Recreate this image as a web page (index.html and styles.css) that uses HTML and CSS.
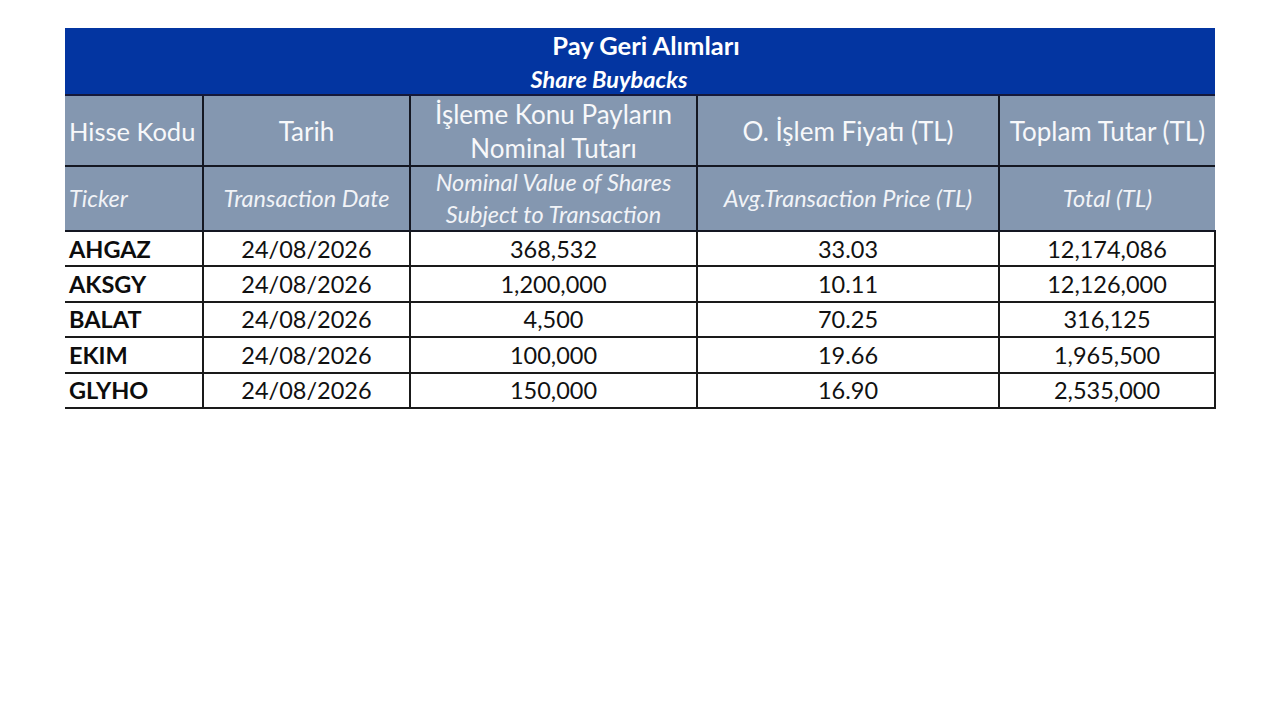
FILE: index.html
```html
<!DOCTYPE html>
<html lang="tr">
<head>
<meta charset="utf-8">
<title>Pay Geri Alımları</title>
<link rel="stylesheet" href="styles.css">
</head>
<body>
<div class="page">
  <table class="buybacks">
    <colgroup>
      <col class="c1"><col class="c2"><col class="c3"><col class="c4"><col class="c5">
    </colgroup>
    <thead>
      <tr class="title-row">
        <th colspan="5" class="title">
          <div class="title-tr">Pay Geri Alımları</div>
          <div class="title-en">Share Buybacks</div>
        </th>
      </tr>
      <tr class="head-tr">
        <th class="left">Hisse Kodu</th>
        <th>Tarih</th>
        <th>İşleme Konu Payların<br>Nominal Tutarı</th>
        <th>O. İşlem Fiyatı (TL)</th>
        <th>Toplam Tutar (TL)</th>
      </tr>
      <tr class="head-en">
        <th class="left">Ticker</th>
        <th>Transaction Date</th>
        <th>Nominal Value of Shares<br>Subject to Transaction</th>
        <th>Avg.Transaction Price (TL)</th>
        <th>Total (TL)</th>
      </tr>
    </thead>
    <tbody>
      <tr><td class="ticker">AHGAZ</td><td>24/08/2026</td><td>368,532</td><td>33.03</td><td>12,174,086</td></tr>
      <tr><td class="ticker">AKSGY</td><td>24/08/2026</td><td>1,200,000</td><td>10.11</td><td>12,126,000</td></tr>
      <tr><td class="ticker">BALAT</td><td>24/08/2026</td><td>4,500</td><td>70.25</td><td>316,125</td></tr>
      <tr><td class="ticker">EKIM</td><td>24/08/2026</td><td>100,000</td><td>19.66</td><td>1,965,500</td></tr>
      <tr><td class="ticker">GLYHO</td><td>24/08/2026</td><td>150,000</td><td>16.90</td><td>2,535,000</td></tr>
    </tbody>
  </table>
</div>
</body>
</html>
```

FILE: styles.css
```css
html, body {
  margin: 0;
  padding: 0;
  background: #ffffff;
}

body {
  font-family: Lato, "Open Sans", "Liberation Sans", sans-serif;
}

.page {
  padding: 28px 0 0 65px;
}

.buybacks {
  border-collapse: collapse;
  table-layout: fixed;
  width: 1150px;
}

.c1 { width: 138px; }
.c2 { width: 207px; }
.c3 { width: 287px; }
.c4 { width: 302px; }
.c5 { width: 216px; }

.buybacks th,
.buybacks td {
  padding: 0 3px;
  text-align: center;
  vertical-align: middle;
  white-space: nowrap;
}

.title-row .title {
  background: #0335a1;
  color: #ffffff;
  height: 66px;
  padding: 0;
  border-bottom: 2px solid #15193a;
}

.title-tr {
  font-weight: 700;
  font-size: 25.5px;
  line-height: 34px;
  padding-left: 12px;
}

.title-en {
  font-weight: 700;
  font-style: italic;
  font-size: 23.5px;
  line-height: 30px;
  padding-top: 2px;
  padding-right: 62px;
}

.head-tr th,
.head-en th {
  background: #8497b0;
  color: #f7f8fa;
  font-weight: 400;
  border-right: 2px solid #141722;
  border-bottom: 2px solid #141722;
}

.head-tr th:last-child,
.head-en th:last-child {
  border-right: none;
}

.head-tr th {
  height: 69px;
  font-size: 26px;
  line-height: 34px;
}

.head-tr th.left {
  font-size: 25.5px;
}

.head-en th {
  height: 63px;
  font-size: 23.5px;
  font-style: italic;
  line-height: 31.5px;
  color: #f1f3f7;
}

.buybacks th.left,
.buybacks td.ticker {
  text-align: left;
  padding-left: 4px;
}

.buybacks tbody td {
  height: 33.4px;
  font-size: 23.5px;
  line-height: 28px;
  color: #111111;
  border-right: 2px solid #1a1a1a;
  border-bottom: 2px solid #1a1a1a;
}

.buybacks tbody td.ticker {
  font-weight: 700;
  color: #0d0d0d;
}
```
